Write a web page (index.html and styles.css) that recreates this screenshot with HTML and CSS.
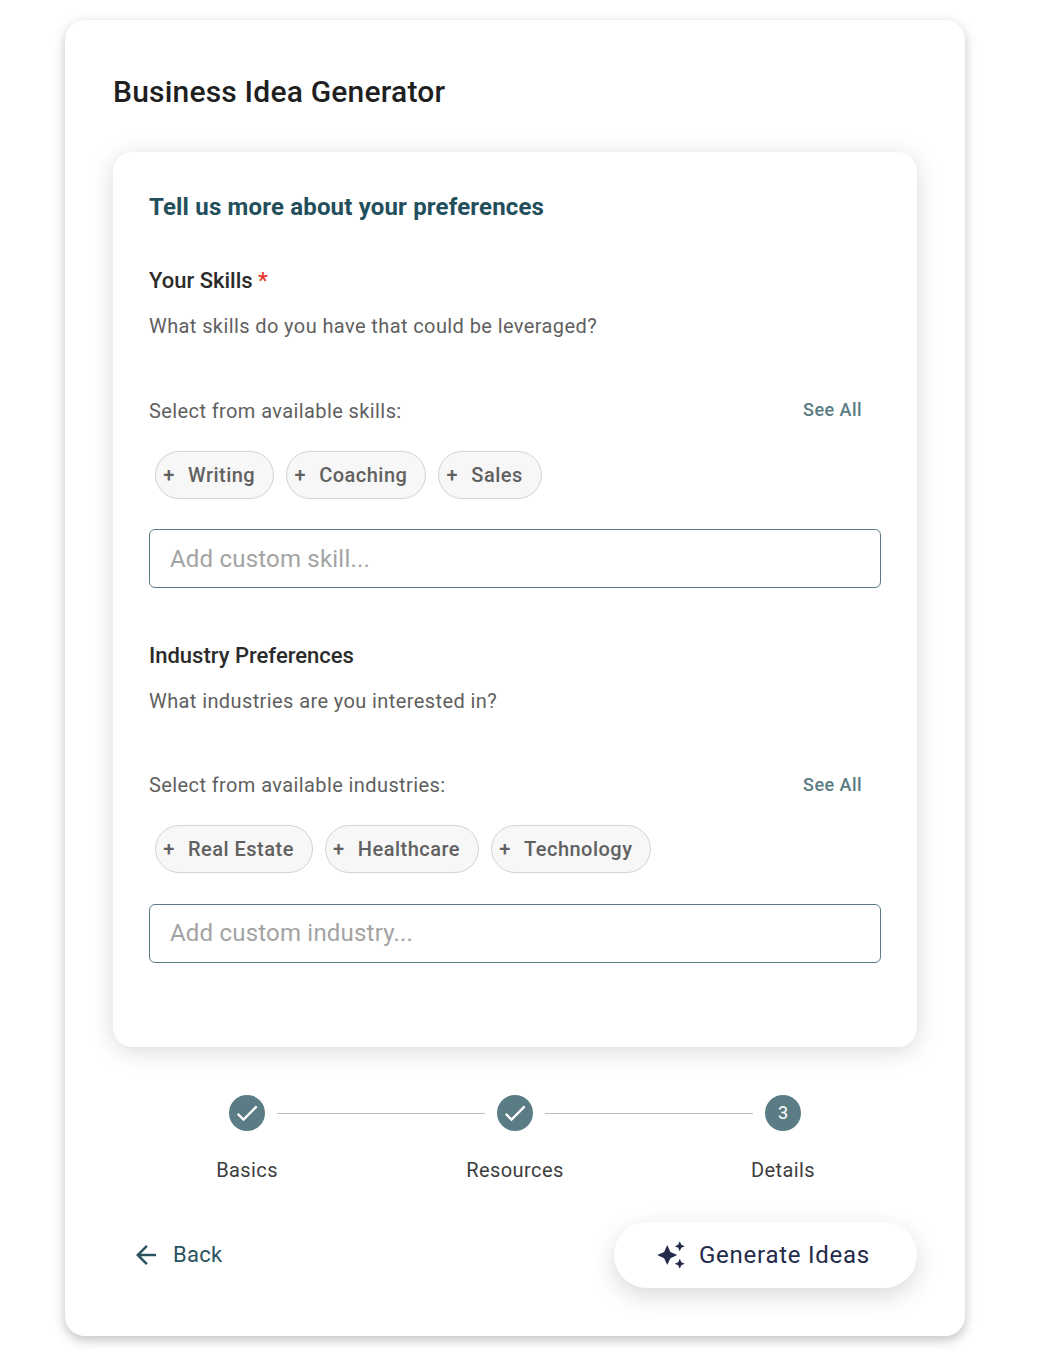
FILE: index.html
```html
<!DOCTYPE html>
<html lang="en">
<head>
    <meta charset="UTF-8">
    <meta name="viewport" content="width=device-width, initial-scale=1.0">
    <title>Business Idea Generator</title>
    <link rel="stylesheet" href="styles.css">
</head>
<body>
    <div class="page-card">
        <h1 class="page-title">Business Idea Generator</h1>

        <div class="form-card">
            <h2 class="form-title">Tell us more about your preferences</h2>

            <section class="field">
                <h3 class="field-label">Your Skills <span class="required">*</span></h3>
                <p class="field-help">What skills do you have that could be leveraged?</p>
                <div class="select-row">
                    <span class="select-text">Select from available skills:</span>
                    <a class="see-all" href="#">See All</a>
                </div>
                <div class="chips">
                    <button class="chip"><span class="chip-plus">+</span>Writing</button>
                    <button class="chip"><span class="chip-plus">+</span>Coaching</button>
                    <button class="chip"><span class="chip-plus">+</span>Sales</button>
                </div>
                <input class="custom-input" type="text" placeholder="Add custom skill...">
            </section>

            <section class="field">
                <h3 class="field-label">Industry Preferences</h3>
                <p class="field-help">What industries are you interested in?</p>
                <div class="select-row">
                    <span class="select-text">Select from available industries:</span>
                    <a class="see-all" href="#">See All</a>
                </div>
                <div class="chips">
                    <button class="chip"><span class="chip-plus">+</span>Real Estate</button>
                    <button class="chip"><span class="chip-plus">+</span>Healthcare</button>
                    <button class="chip"><span class="chip-plus">+</span>Technology</button>
                </div>
                <input class="custom-input" type="text" placeholder="Add custom industry...">
            </section>
        </div>

        <div class="stepper">
            <div class="step">
                <div class="step-circle">
                    <svg viewBox="0 0 24 24" width="28" height="28"><path d="M9 16.2 4.8 12l-1.400 1.400L9 19 21 7l-1.400-1.400z" fill="#fff"/></svg>
                </div>
                <div class="step-name">Basics</div>
            </div>
            <div class="step-line"></div>
            <div class="step">
                <div class="step-circle">
                    <svg viewBox="0 0 24 24" width="28" height="28"><path d="M9 16.2 4.8 12l-1.400 1.400L9 19 21 7l-1.400-1.400z" fill="#fff"/></svg>
                </div>
                <div class="step-name">Resources</div>
            </div>
            <div class="step-line"></div>
            <div class="step">
                <div class="step-circle">3</div>
                <div class="step-name">Details</div>
            </div>
        </div>

        <div class="actions">
            <button class="back-btn">
                <svg viewBox="0 0 24 24" width="30" height="30"><path d="M20 11H7.830l5.590-5.590L12 4l-8 8 8 8 1.410-1.410L7.830 13H20z" fill="#2a5361"/></svg>
                Back
            </button>
            <button class="generate-btn">
                <svg viewBox="0 0 24 24" width="30" height="30"><path d="M19 9l1.250-2.750L23 5l-2.750-1.250L19 1l-1.250 2.750L15 5l2.750 1.250zM11.500 9.500L9 4 6.500 9.500 1 12l5.500 2.500L9 20l2.500-5.500L17 12zM19 15l-1.250 2.750L15 19l2.750 1.250L19 23l1.250-2.750L23 19l-2.750-1.250z" fill="#232a4a"/></svg>
                Generate Ideas
            </button>
        </div>
    </div>
</body>
</html>
```

FILE: styles.css
```css
* {
    margin: 0;
    padding: 0;
    box-sizing: border-box;
}

body {
    background: #fff;
    font-family: Roboto, sans-serif;
    padding: 20px 81px 18px 65px;
}

.page-card {
    background: #fff;
    border-radius: 20px;
    padding: 48px 48px 48px;
    box-shadow: 0 4px 12px rgba(0, 0, 0, 0.25);
}

.page-title {
    font-size: 30px;
    font-weight: 500;
    line-height: 48px;
    letter-spacing: 0.2px;
    color: #1f1f1f;
    margin-bottom: 36px;
}

.form-card {
    background: #fff;
    border-radius: 20px;
    padding: 36px 36px 83.8px;
    box-shadow: 0 4px 24px rgba(0, 0, 0, 0.15);
}

.form-title {
    font-size: 24px;
    font-weight: 700;
    line-height: 38px;
    letter-spacing: 0.17px;
    color: #234f5c;
    margin-bottom: 40px;
}

.field + .field {
    margin-top: 52.2px;
}

.field-label {
    font-size: 22px;
    font-weight: 500;
    line-height: 30px;
    color: #2b2b2b;
    margin-bottom: 15px;
}

.required {
    color: #e53528;
}

.field-help {
    font-size: 20px;
    line-height: 30px;
    letter-spacing: 0.4px;
    color: #5f5f5f;
    margin-bottom: 54.5px;
}

.select-row {
    display: flex;
    justify-content: space-between;
    align-items: center;
    height: 30px;
    margin-bottom: 25px;
}

.select-text {
    font-size: 20px;
    letter-spacing: 0.4px;
    color: #5f5f5f;
}

.see-all {
    font-size: 18px;
    font-weight: 500;
    letter-spacing: 0.45px;
    color: #5a7c85;
    text-decoration: none;
    margin: 0 19px 2px 0;
}

.chips {
    display: flex;
    gap: 12px;
    padding-left: 6px;
    margin-bottom: 30.4px;
}

.chip {
    display: flex;
    align-items: center;
    height: 48px;
    padding: 0 18px 0 6px;
    border: 1px solid #d3d3d3;
    border-radius: 24px;
    background: #f7f7f7;
    font-family: inherit;
    font-size: 20px;
    font-weight: 500;
    letter-spacing: 0.48px;
    color: #616161;
}

.chip-plus {
    width: 14px;
    margin-right: 12px;
    text-align: center;
}

.custom-input {
    display: block;
    width: 100%;
    height: 59.6px;
    padding: 0 20px;
    border: 1px solid #5a7c85;
    border-radius: 6px;
    font-family: inherit;
    font-size: 24px;
    letter-spacing: 0.2px;
    color: #333;
}

.custom-input::placeholder {
    color: #a3a3a3;
}

.stepper {
    display: flex;
    align-items: flex-start;
    padding: 48px 66px 0;
}

.step {
    width: 136px;
    display: flex;
    flex-direction: column;
    align-items: center;
}

.step-circle {
    width: 36px;
    height: 36px;
    border-radius: 50%;
    background: #5a7c85;
    color: #fff;
    font-size: 18px;
    display: flex;
    align-items: center;
    justify-content: center;
}

.step-name {
    margin-top: 24px;
    font-size: 20px;
    line-height: 30px;
    letter-spacing: 0.4px;
    color: #3d3d3d;
}

.step-line {
    flex: 1;
    height: 1px;
    margin: 18px -38px 0;
    background: #bdbdbd;
}

.actions {
    display: flex;
    justify-content: space-between;
    align-items: center;
    margin-top: 37px;
}

.back-btn {
    display: flex;
    align-items: center;
    gap: 12px;
    margin: 0 0 0 18px;
    border: none;
    background: none;
    font-family: inherit;
    font-size: 22px;
    letter-spacing: 0.3px;
    color: #2a5361;
}

.generate-btn {
    display: flex;
    align-items: center;
    gap: 13px;
    height: 66px;
    padding: 0 47px 0 42px;
    border: none;
    border-radius: 33px;
    background: #fff;
    font-family: inherit;
    font-size: 24px;
    letter-spacing: 0.75px;
    color: #232a4a;
    box-shadow: 0 8px 24px rgba(0, 0, 0, 0.15);
}
```
